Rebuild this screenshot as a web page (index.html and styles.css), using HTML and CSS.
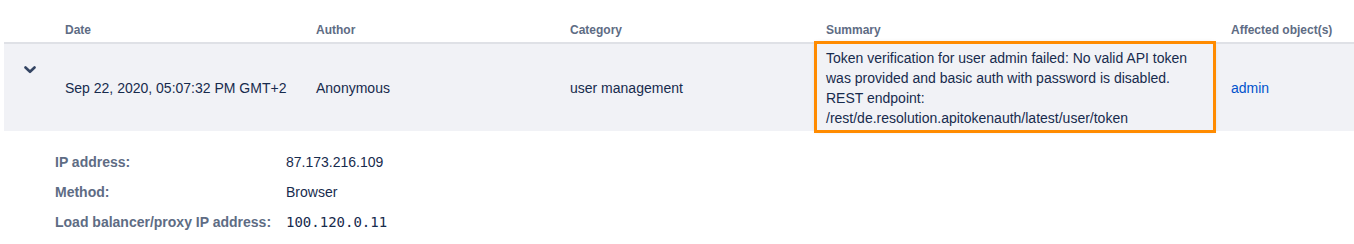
FILE: index.html
```
<!DOCTYPE html>
<html lang="en">

<head>
    <meta charset="UTF-8">
    <meta name="viewport" content="width=device-width, initial-scale=1.0">
    <title>Audit log</title>
    <link rel="stylesheet" href="styles.css">
</head>

<body>

    <div class="log">
        <table class="log-table">
            <colgroup>
                <col class="col-toggle">
                <col class="col-date">
                <col class="col-author">
                <col class="col-category">
                <col class="col-summary">
                <col>
            </colgroup>
            <thead>
                <tr>
                    <th></th>
                    <th>Date</th>
                    <th>Author</th>
                    <th>Category</th>
                    <th>Summary</th>
                    <th class="affected">Affected object(s)</th>
                </tr>
            </thead>
            <tbody>
                <tr class="entry">
                    <td class="toggle">
                        <svg width="12" height="8" viewBox="0 0 12 8">
                            <path d="M1.5 1.5 L6 5.8 L10.5 1.5" fill="none" stroke="#344563" stroke-width="2.6" stroke-linecap="round" stroke-linejoin="round"/>
                        </svg>
                    </td>
                    <td>Sep 22, 2020, 05:07:32 PM GMT+2</td>
                    <td>Anonymous</td>
                    <td>user management</td>
                    <td class="summary">Token verification for user admin failed: No valid API token<br>was provided and basic auth with password is disabled.<br>REST endpoint:<br>/rest/de.resolution.apitokenauth/latest/user/token</td>
                    <td class="affected"><a href="#">admin</a></td>
                </tr>
            </tbody>
        </table>

        <!-- Expanded entry details -->
        <div class="details">
            <div class="label">IP address:</div>
            <div class="value">87.173.216.109</div>
            <div class="label">Method:</div>
            <div class="value">Browser</div>
            <div class="label">Load balancer/proxy IP address:</div>
            <div class="value mono">100.120.0.11</div>
        </div>
    </div>

</body>

</html>
```

FILE: styles.css
```
body {
    font-family: "Liberation Sans", Arial, sans-serif;
    background-color: #ffffff;
    color: #172b4d;
    margin: 0;
    padding: 0;
}

.log {
    margin-left: 4px;
}

.log-table {
    width: 1350px;
    border-collapse: collapse;
    table-layout: fixed;
    font-size: 14px;
}

.col-toggle {
    width: 51px;
}

.col-date {
    width: 251px;
}

.col-author {
    width: 254px;
}

.col-category {
    width: 256px;
}

.col-summary {
    width: 398px;
}

th {
    text-align: left;
    font-size: 12px;
    font-weight: bold;
    line-height: 16px;
    color: #5e6c84;
    padding: 22px 10px 4px;
    border-bottom: 2px solid #dfe1e6;
    white-space: nowrap;
}

th.affected {
    padding-left: 17px;
}

.entry {
    background-color: #f1f2f6;
}

.entry td {
    padding: 4px 10px 3px;
    line-height: 20px;
    vertical-align: middle;
    white-space: nowrap;
}

.entry td.affected {
    padding-left: 17px;
}

.entry td.toggle {
    vertical-align: top;
    padding: 22px 0 0 20px;
}

.toggle svg {
    display: block;
}

.entry td.summary {
    outline: 3px solid #ff8b00;
    outline-offset: -1px;
    box-shadow: 0 0 4px rgba(9, 30, 66, 0.25);
}

.affected a {
    color: #0052cc;
    text-decoration: none;
}

.details {
    display: grid;
    grid-template-columns: 231px auto;
    grid-auto-rows: 30px;
    align-items: center;
    padding: 16px 0 0 51px;
    font-size: 14px;
}

.label {
    font-weight: bold;
    color: #5e6c84;
}

.value {
    color: #172b4d;
}

.mono {
    font-family: "DejaVu Sans Mono", monospace;
}
```
